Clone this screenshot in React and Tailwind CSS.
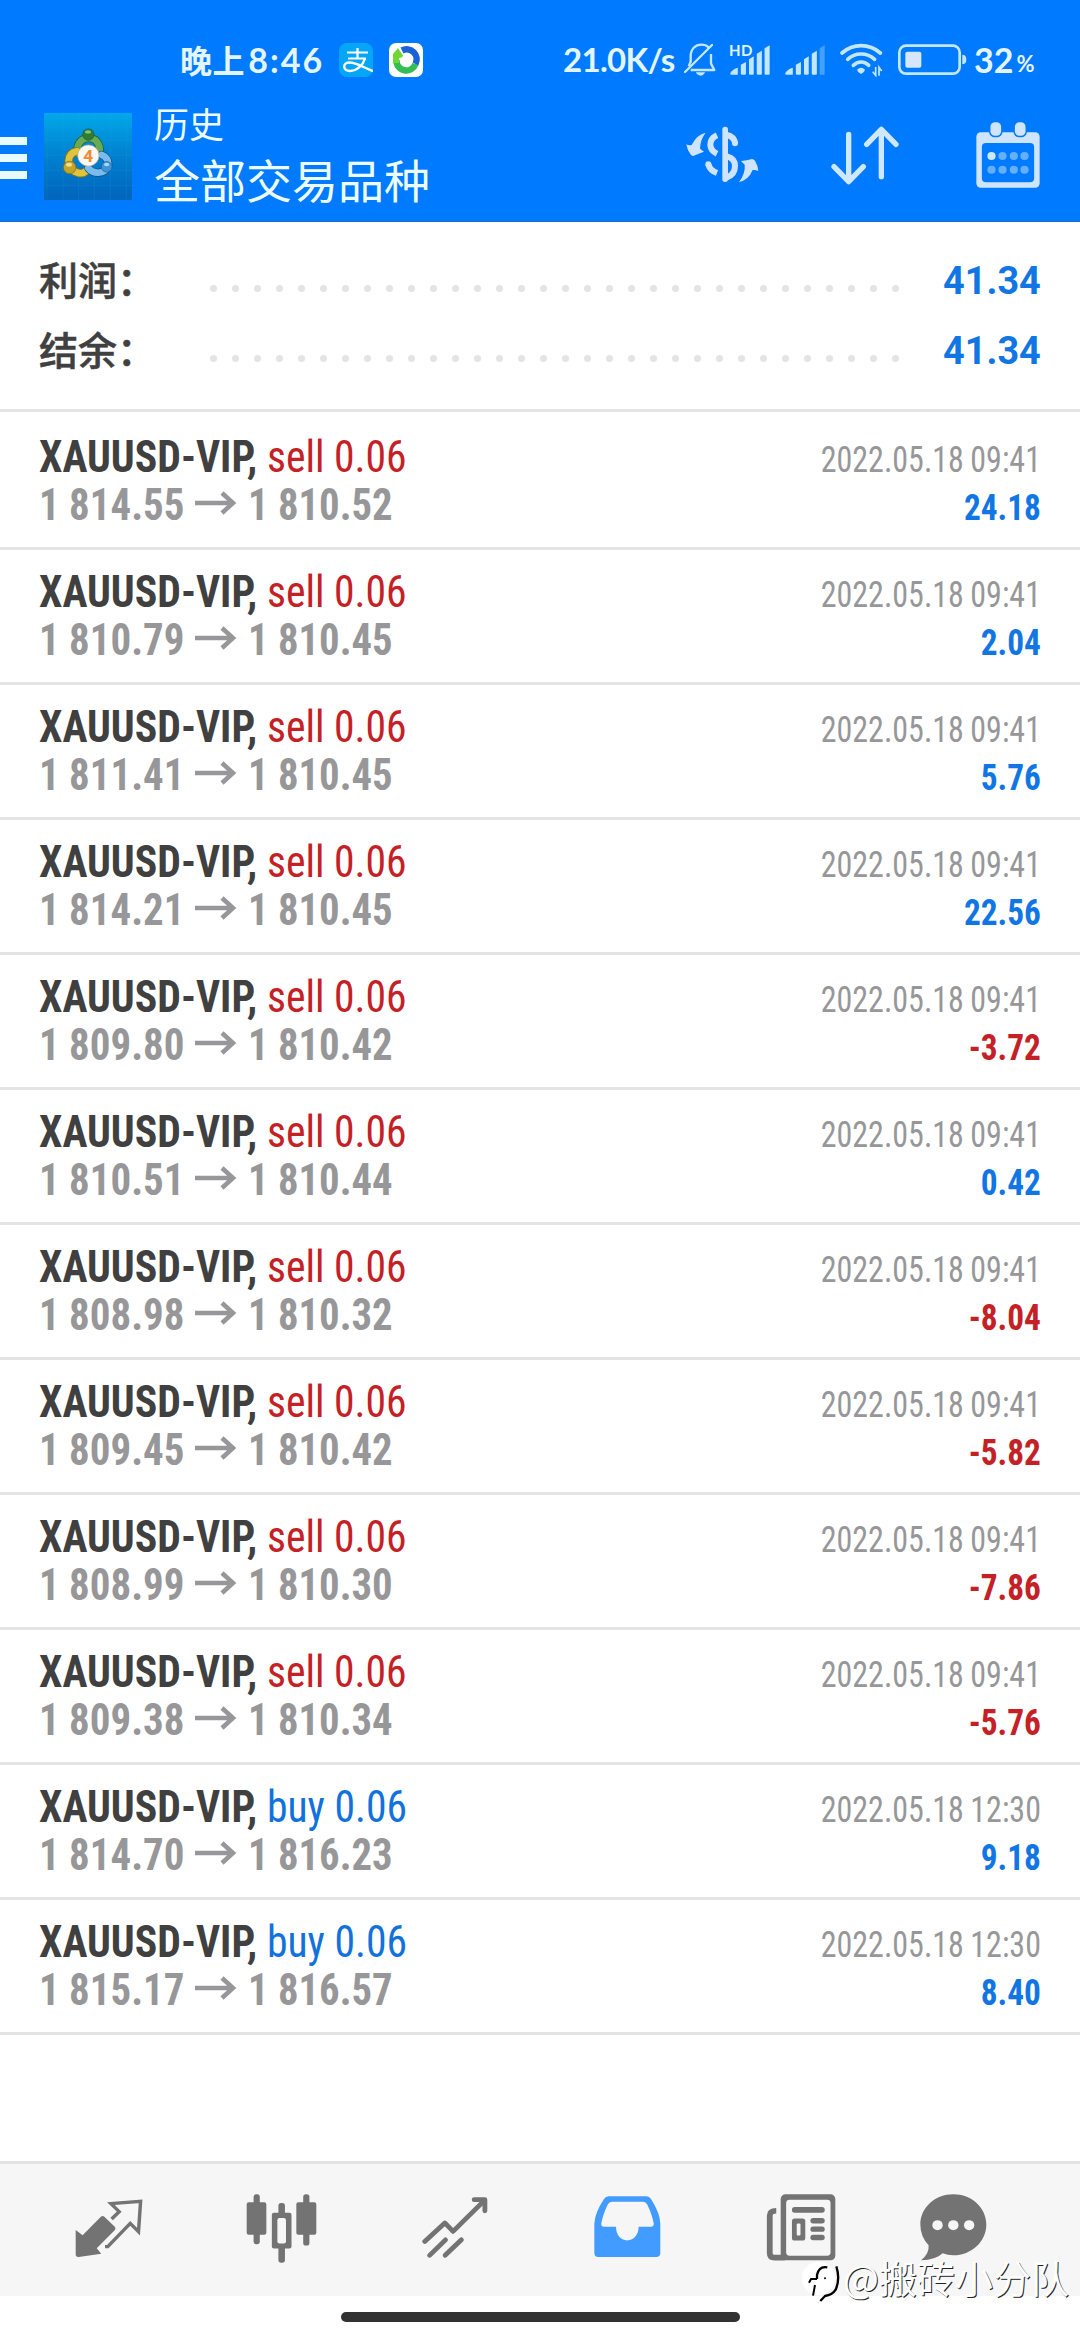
import clsx from 'clsx';

const deals = [
  { type: 'sell', open: '1 814.55', close: '1 810.52', time: '2022.05.18 09:41', profit: '24.18' },
  { type: 'sell', open: '1 810.79', close: '1 810.45', time: '2022.05.18 09:41', profit: '2.04' },
  { type: 'sell', open: '1 811.41', close: '1 810.45', time: '2022.05.18 09:41', profit: '5.76' },
  { type: 'sell', open: '1 814.21', close: '1 810.45', time: '2022.05.18 09:41', profit: '22.56' },
  { type: 'sell', open: '1 809.80', close: '1 810.42', time: '2022.05.18 09:41', profit: '-3.72' },
  { type: 'sell', open: '1 810.51', close: '1 810.44', time: '2022.05.18 09:41', profit: '0.42' },
  { type: 'sell', open: '1 808.98', close: '1 810.32', time: '2022.05.18 09:41', profit: '-8.04' },
  { type: 'sell', open: '1 809.45', close: '1 810.42', time: '2022.05.18 09:41', profit: '-5.82' },
  { type: 'sell', open: '1 808.99', close: '1 810.30', time: '2022.05.18 09:41', profit: '-7.86' },
  { type: 'sell', open: '1 809.38', close: '1 810.34', time: '2022.05.18 09:41', profit: '-5.76' },
  { type: 'buy', open: '1 814.70', close: '1 816.23', time: '2022.05.18 12:30', profit: '9.18' },
  { type: 'buy', open: '1 815.17', close: '1 816.57', time: '2022.05.18 12:30', profit: '8.40' },
];

const summary = [
  { label: '利润：', value: '41.34' },
  { label: '结余：', value: '41.34' },
];

// ---- Status bar icons ----

function BellOffIcon() {
  return (
    <svg className="w-8 h-[33px] shrink-0" viewBox="40 22 96 99" fill="none" stroke="#c3e7ff" strokeWidth="7">
      <path d="M60 80V62C60 40 74 27 92 27C100 27 108 29 114 35" />
      <path d="M60 103H131L121 84V55" strokeLinejoin="round" />
      <path d="M60 78L54 92" />
      <path d="M43 109L124 28" strokeLinecap="round" />
      <path d="M75 110H104Q98 120 90 120Q81 120 75 110Z" fill="#c3e7ff" stroke="none" />
    </svg>
  );
}

function SignalIcon({ weak }) {
  return (
    <svg className="w-[41px] h-[31px]" viewBox="545 67 121 93" preserveAspectRatio="none" fill="#c3e7ff">
      <path d="M549 154Q556 142 571 138V159H552Q547 159 549 154Z" />
      <path d="M580 129L595 121V156Q595 159 592 159H583Q580 159 580 156Z" />
      <path d="M604 113L618 104V156Q618 159 615 159H607Q604 159 604 156Z" />
      <path d="M627 96L642 87V156Q642 159 639 159H630Q627 159 627 156Z" />
      <path d="M650 80L665 71V156Q665 159 662 159H653Q650 159 650 156Z" opacity={weak ? 0.35 : 1} />
    </svg>
  );
}

function WifiIcon() {
  return (
    <svg className="w-[43px] h-[34px]" viewBox="507 25 129 102" fill="none" stroke="#c3e7ff" strokeWidth="11" strokeLinecap="round">
      <path d="M513 55Q538 33 570 33Q603 33 628 55" />
      <path d="M530 74Q547 58 570 58Q594 58 611 74" />
      <path d="M547 92Q557 82 570 82Q584 82 593 92" />
      <path d="M558 105Q570 94 582 105Q581 112 570 118Q559 112 558 105Z" fill="#c3e7ff" stroke="none" />
      <path d="M614 97V122L605 111M624 123V98L632 109" strokeWidth="5" strokeLinecap="butt" />
    </svg>
  );
}

function BatteryIcon() {
  return (
    <svg className="w-[69px] h-8" viewBox="680 25 207 96">
      <rect x="684" y="30" width="181" height="84" rx="20" fill="none" stroke="#c3e7ff" strokeWidth="8" />
      <rect x="702" y="48" width="48" height="48" rx="6" fill="#d6e6fd" />
      <path d="M873 57Q885 57 885 71.500Q885 86 873 86Z" fill="#c3e7ff" />
    </svg>
  );
}

function AlipayBadge() {
  return (
    <svg className="w-[34px] h-[34px]" viewBox="0 0 34 34" fill="none" stroke="#fff">
      <rect width="34" height="34" rx="8" fill="#05a6f5" stroke="none" />
      <path d="M8 9.500H29M18.500 5V15M9 15.500H27" strokeWidth="2.200" />
      <path d="M26 15.500C24 22 18 28 11 28C4 28 3 20 10 19.500C17 19 25 25 34 28" strokeWidth="2.400" />
    </svg>
  );
}

function SyncBadge() {
  return (
    <svg className="w-[34px] h-[34px]" viewBox="0 0 34 34">
      <rect width="34" height="34" rx="7" fill="#fff" />
      <path d="M7.500 17A9.800 9.800 0 0 0 26.500 21" fill="none" stroke="#35bd55" strokeWidth="6.500" />
      <path d="M13 7.500A10 10 0 0 1 26.500 21" fill="none" stroke="#1b62d6" strokeWidth="6.500" />
      <path d="M4 20V11L9 5L15 14L10 15V20Z" fill="#6fd636" />
      <path d="M12 16L15 11L21 14L24 19H21V23L15 21Z" fill="#fff" />
    </svg>
  );
}

// ---- App bar icons ----

function AppLogo() {
  return (
    <svg className="w-[88px] h-[87px]" viewBox="41 38 264 262" preserveAspectRatio="none">
      <defs>
        <linearGradient id="sky" x1="0" y1="0" x2="0" y2="1">
          <stop offset="0" stopColor="#00a8e8" />
          <stop offset="0.5" stopColor="#0080d0" />
          <stop offset="1" stopColor="#0064bb" />
        </linearGradient>
      </defs>
      <rect x="41" y="38" width="264" height="262" fill="url(#sky)" />
      <path
        d="M50 38V300M98 38V300M145 38V300M192 38V300M240 38V300M288 38V300M41 78H305M41 120H305M41 165H305M41 210H305M41 256H305"
        stroke="#3db4e8"
        strokeWidth="1.500"
        opacity="0.25"
      />
      <g strokeLinecap="round" fill="none">
        <path d="M142 160Q138 134 154 120Q174 106 196 120Q212 137 207 160" stroke="#255f2b" strokeWidth="25" />
        <path d="M142 160Q138 134 154 120Q174 106 196 120Q212 137 207 160" stroke="#68ab55" strokeWidth="20" />
        <path d="M140 153Q116 158 115 182Q117 212 142 218Q158 222 166 214" stroke="#8a7a1c" strokeWidth="25" />
        <path d="M140 153Q116 158 115 182Q117 212 142 218Q158 222 166 214" stroke="#e2c43c" strokeWidth="20" />
        <path d="M214 164Q234 172 234 194Q228 216 204 218Q184 217 174 204" stroke="#17568f" strokeWidth="25" />
        <path d="M214 164Q234 172 234 194Q228 216 204 218Q184 217 174 204" stroke="#78bbec" strokeWidth="20" />
      </g>
      <circle cx="174" cy="103" r="17" fill="#2f7d35" stroke="#1e5a28" strokeWidth="2" />
      <ellipse cx="173" cy="95" rx="9" ry="5" fill="#86c47c" />
      <circle cx="118" cy="202" r="19" fill="#c4a52a" stroke="#7a6a1c" strokeWidth="2" />
      <ellipse cx="116" cy="194" rx="9" ry="6" fill="#f0e08a" />
      <circle cx="229" cy="200" r="16" fill="#3f93d8" stroke="#1c5c99" strokeWidth="2" />
      <ellipse cx="229" cy="193" rx="8" ry="5" fill="#a9d8f7" />
      <circle cx="174" cy="166" r="32" fill="#fbf7f2" stroke="#b9a88c" strokeWidth="2" />
      <text x="174" y="185" textAnchor="middle" fontFamily="Roboto, sans-serif" fontSize="52" fontWeight="700" fill="#f08a35">
        4
      </text>
    </svg>
  );
}

function CurrencyIcon() {
  return (
    <svg className="w-[73px] h-[57px]" viewBox="47 273 219 171" fill="#cfe4ff">
      <rect x="156" y="275" width="17" height="166" rx="8" />
      <g fill="none" stroke="#cfe4ff" strokeWidth="18">
        <path d="M140 301Q120 310 120 330Q121 347 140 356" />
        <path d="M140 414Q119 406 114 388" />
        <path d="M170 300Q190 304 195 325" />
        <path d="M170 364Q194 370 194 393Q194 418 170 427" />
      </g>
      <circle cx="114" cy="388" r="9" />
      <circle cx="194" cy="325" r="9" />
      <path d="M106 293Q90 313 89 341L101 350Q84 356 69 363Q66 363 62 360Q50 345 48 328Q55 332 64 330Q80 298 106 293Z" />
      <path d="M206 441Q226 415 223 389L212 378Q230 376 245 372Q250 372 254 377Q262 390 264 408Q256 404 247 405Q234 436 206 441Z" />
    </svg>
  );
}

function SortIcon() {
  return (
    <svg className="w-[68px] h-[59px]" viewBox="483 273 204 177" fill="none" stroke="#cfe8ff" strokeWidth="16" strokeLinecap="round" strokeLinejoin="round">
      <path d="M536 298V439M492 395L536 440L580 395" />
      <path d="M634 425V284M590 328L634 283L678 328" />
    </svg>
  );
}

function CalendarIcon() {
  const cols = [1312, 1344, 1377, 1408];
  return (
    <svg className="w-16 h-[66px]" viewBox="1267 305 186 198" preserveAspectRatio="none">
      <rect x="1268" y="336" width="184" height="166" rx="13" fill="#cfe4ff" />
      <rect x="1284" y="368" width="152" height="118" rx="12" fill="#007aff" />
      <rect x="1305" y="300" width="39" height="51" rx="17" fill="#007aff" />
      <rect x="1376" y="300" width="39" height="51" rx="17" fill="#007aff" />
      <rect x="1309" y="306" width="31" height="40" rx="13" fill="#cfe4ff" />
      <rect x="1380" y="306" width="31" height="40" rx="13" fill="#cfe4ff" />
      {cols.map((cx) => (
        <g key={cx} fill="#66affc">
          <circle cx={cx} cy="407" r="12" fill={cx === 1312 ? '#cfe8ff' : undefined} />
          <circle cx={cx} cy="448" r="12" />
        </g>
      ))}
    </svg>
  );
}

// ---- Bottom navigation icons ----

function QuotesIcon() {
  return (
    <svg className="w-[68px] h-[59px]" viewBox="217 147 197 177" preserveAspectRatio="none" fill="#737373">
      <path d="M219 240L239 256L292 200Q297 196 302 200L333 231Q336 236 332 241L280 295L293 311L228 321Q219 322 219 313Z" />
      <path
        d="M304 290H312L377 220L401 245L407 154L321 161L345 185L323 207"
        fill="none"
        stroke="#737373"
        strokeWidth="10"
      />
    </svg>
  );
}

function CandlesIcon() {
  return (
    <svg className="w-[71px] h-[69px]" viewBox="713 131 206 206" preserveAspectRatio="none" fill="#737373">
      <rect x="735" y="132" width="18" height="149" rx="8" />
      <rect x="715" y="156" width="57" height="97" rx="6" />
      <rect x="879" y="132" width="18" height="153" rx="8" />
      <rect x="859" y="156" width="58" height="97" rx="6" />
      <rect x="807" y="158" width="19" height="178" rx="8" />
      <rect x="788" y="187" width="57" height="107" rx="6" />
      <rect x="804" y="203" width="25" height="76" rx="6" fill="#f6f6f6" />
    </svg>
  );
}

function TradeIcon() {
  return (
    <svg
      className="w-[66px] h-[63px]"
      viewBox="1223 138 191 187"
      preserveAspectRatio="none"
      fill="none"
      stroke="#737373"
      strokeWidth="14"
      strokeLinecap="round"
      strokeLinejoin="round"
    >
      <path d="M1231 273L1289 218L1313 243L1403 152" />
      <path d="M1374 149H1405V182" />
      <path d="M1245 314L1291 268M1290 314L1337 268" />
    </svg>
  );
}

function HistoryIcon() {
  return (
    <svg className="w-[67px] h-[62px]" viewBox="157 139 195 185" preserveAspectRatio="none">
      <path
        fill="#429bff"
        fillRule="evenodd"
        d="M200 140H310Q318 140 323 148Q350 192 350 222V309Q350 321 338 321H170Q158 321 158 309V222Q159 190 186 148Q191 140 200 140ZM209 156Q201 156 197 164Q182 196 178 222Q178 231 186 231H221C221 285 286 285 287 231H323Q331 231 331 222Q327 196 312 164Q308 156 300 156Z"
      />
    </svg>
  );
}

function NewsIcon() {
  return (
    <svg className="w-[70px] h-[67px]" viewBox="655 131 205 200" preserveAspectRatio="none" fill="#737373">
      <rect x="698" y="132" width="160" height="197" rx="14" />
      <rect x="714" y="148" width="130" height="167" rx="10" fill="#f6f6f6" />
      <path d="M685 181Q666 181 666 196V308Q666 321 680 321H710" fill="none" stroke="#737373" strokeWidth="17" />
      <rect x="731" y="170" width="96" height="17" rx="8" />
      <rect x="731" y="204" width="39" height="66" rx="8" />
      <rect x="745" y="219" width="11" height="36" rx="3" fill="#f6f6f6" />
      <rect x="785" y="203" width="42" height="16" rx="8" />
      <rect x="785" y="228" width="42" height="16" rx="8" />
      <rect x="785" y="253" width="42" height="16" rx="8" />
    </svg>
  );
}

function ChatIcon() {
  return (
    <svg className="w-[67px] h-[67px]" viewBox="1102 131 195 200" preserveAspectRatio="none" fill="#737373">
      <path d="M1199 132C1252 132 1295 172 1295 222C1295 273 1252 314 1199 314Q1182 314 1168 308Q1148 328 1105 329Q1130 308 1127 284Q1103 258 1103 222C1103 172 1146 132 1199 132Z" />
      <circle cx="1153" cy="224" r="15" fill="#f6f6f6" />
      <circle cx="1199" cy="224" r="15" fill="#f6f6f6" />
      <circle cx="1245" cy="224" r="15" fill="#f6f6f6" />
    </svg>
  );
}

function WatermarkLogo() {
  return (
    <svg className="w-[41px] h-[46px]" viewBox="37 57 123 138" fill="none">
      <circle cx="86" cy="118" r="50" fill="#fff" />
      <path d="M113 85Q88 80 82 108V120" stroke="#000" strokeWidth="7" />
      <path d="M76 138L70 170" stroke="#000" strokeWidth="6" />
      <path d="M58 131L64 120H82" stroke="#000" strokeWidth="6" />
      <path d="M140 82Q152 120 138 152Q128 168 106 171L92 186" stroke="#000" strokeWidth="7" />
      <circle cx="106" cy="118" r="3" fill="#000" />
    </svg>
  );
}

function StatusBar() {
  return (
    <div className="flex h-[98px] pt-[21px] items-center font-[Lato,'Noto_Sans_CJK_SC',sans-serif] font-bold text-[#e3f5ff]">
      <div className="w-[563px] pl-[180px] flex items-center">
        <span className="w-[159px] text-[34px] leading-none whitespace-nowrap tracking-[2px]">
          <span className="text-[32px] tracking-[0.5px]">晚上</span> <span className="-ml-[7px]">8:46</span>
        </span>
        <AlipayBadge />
        <span className="ml-4">
          <SyncBadge />
        </span>
      </div>
      <span className="w-[121px] text-[33px] leading-none whitespace-nowrap tracking-[-0.7px]">21.0K/s</span>
      <BellOffIcon />
      <div className="relative ml-[13px]">
        <SignalIcon />
        <span className="absolute left-0 -top-[1px] text-[15px] leading-none tracking-[0.5px]">HD</span>
      </div>
      <div className="ml-[14px]">
        <SignalIcon weak />
      </div>
      <div className="ml-[15px]">
        <WifiIcon />
      </div>
      <div className="ml-[15px]">
        <BatteryIcon />
      </div>
      <span className="ml-[7px] text-[34px] leading-none">32</span>
      <span className="ml-[3px] mt-[9px] text-[22px] leading-none">%</span>
    </div>
  );
}

function AppBar() {
  return (
    <div className="flex h-[124px] items-start">
      <div className="w-[27px] mt-[39px] flex flex-col gap-[9px]">
        <span className="h-2 bg-[#e8fbff]" />
        <span className="h-2 bg-[#e8fbff]" />
        <span className="h-2 bg-[#e8fbff]" />
      </div>
      <div className="ml-[17px] mt-[15px]">
        <AppLogo />
      </div>
      <div className="ml-[22px] w-[532px] font-['Noto_Sans_CJK_SC',sans-serif] text-[#ecfdff]">
        <div className="mt-[5px] text-[35px] leading-[40px]">历史</div>
        <div className="mt-[8px] text-[46px] leading-[54px]">全部交易品种</div>
      </div>
      <div className="mt-[28px]">
        <CurrencyIcon />
      </div>
      <div className="ml-[72px] mt-[28px]">
        <SortIcon />
      </div>
      <div className="ml-[77px] mt-[24px]">
        <CalendarIcon />
      </div>
    </div>
  );
}

function SummaryRow({ label, value }) {
  return (
    <div className="flex h-[70px] items-center px-[39px]">
      <span className="w-[171px] -mt-[5px] font-['Noto_Sans_CJK_SC',sans-serif] font-medium text-[39px] leading-none text-[#404040] [-webkit-text-stroke:0.5px_#404040]">
        {label}
      </span>
      <div className="flex gap-[15.500px] mt-[15px]">
        {Array.from({ length: 32 }, (_, i) => (
          <span key={i} className="w-[6.500px] h-[6.500px] rounded-full bg-[#e4e4e4]" />
        ))}
      </div>
      <span className="ml-auto inline-block origin-right scale-x-[0.97] font-[Roboto,sans-serif] font-bold text-[39px] leading-none text-[#1176e4]">
        {value}
      </span>
    </div>
  );
}

function DealRow({ deal }) {
  return (
    <div className="flex justify-between h-[135px] px-[39px] pt-[18px] border-b-[3px] border-[#e4e4e4] font-['Roboto_Condensed',sans-serif] whitespace-nowrap">
      <div className="text-[44px] leading-[48px]">
        <div className="flex">
          <span className="w-[228px] origin-left scale-x-[0.95] font-bold text-[#404040]">XAUUSD-VIP,</span>
          <span className={clsx('origin-left scale-x-[0.945]', deal.type === 'sell' ? 'text-[#c42126]' : 'text-[#1172dc]')}>
            {deal.type} 0.06
          </span>
        </div>
        <div className="flex items-center font-bold text-[#979799]">
          <span className="w-[156px] origin-left scale-x-[0.93]">{deal.open}</span>
          <svg className="w-[42px] h-[24px] -mt-1 mr-[11px]" viewBox="0 0 42 24" fill="none" stroke="#979799" strokeWidth="4.500">
            <path d="M0 12H39M27 2L38 12L27 22" />
          </svg>
          <span className="origin-left scale-x-[0.925]">{deal.close}</span>
        </div>
      </div>
      <div className="pt-[3px] text-right text-[36px] leading-[48px]">
        <div className="origin-right scale-x-[0.888] text-[#97979a] [word-spacing:-1px]">{deal.time}</div>
        <div
          className={clsx(
            'origin-right scale-x-[0.925] font-bold',
            deal.profit.startsWith('-') ? 'text-[#c42126]' : 'text-[#1176e4]'
          )}
        >
          {deal.profit}
        </div>
      </div>
    </div>
  );
}

function BottomNav() {
  return (
    <nav className="flex h-[135px] items-start border-t-[3px] border-[#e2e2e2] bg-[#f6f6f6] pl-[22px]">
      <div className="w-[173px] flex justify-center pt-[35px]"><QuotesIcon /></div>
      <div className="w-[173px] flex justify-center pt-[30px]"><CandlesIcon /></div>
      <div className="w-[173px] flex justify-center pt-[32px]"><TradeIcon /></div>
      <div className="w-[173px] flex justify-center pt-[32px]"><HistoryIcon /></div>
      <div className="w-[173px] flex justify-center pt-[30px]"><NewsIcon /></div>
      <div className="w-[132px] flex justify-center pt-[30px]"><ChatIcon /></div>
    </nav>
  );
}

export default function App() {
  return (
    <div className="relative flex flex-col w-[1080px] h-[2340px] bg-white overflow-hidden">
      <header className="bg-[#007aff] h-[222px] border-b border-[#1b6cc4]">
        <StatusBar />
        <AppBar />
      </header>

      <section className="h-[190px] pt-[24px] border-b-[3px] border-[#e4e4e4]">
        {summary.map((row) => (
          <SummaryRow key={row.label} label={row.label} value={row.value} />
        ))}
      </section>

      <main className="flex-1 pt-[3px]">
        {deals.map((deal, i) => (
          <DealRow key={i} deal={deal} />
        ))}
      </main>

      <BottomNav />
      <div className="h-[44px] flex justify-center pt-4">
        <div className="w-[399px] h-[10px] rounded-full bg-[#323232]" />
      </div>

      {/* Watermark over the bottom navigation */}
      <div className="absolute left-[802px] top-[2258px] flex items-center">
        <WatermarkLogo />
        <span className="-mt-[9px] text-[38px] leading-[46px] font-['Noto_Sans_CJK_SC',sans-serif] text-white whitespace-nowrap [text-shadow:1px_1px_0_#222]">
          @搬砖小分队
        </span>
      </div>
    </div>
  );
}
